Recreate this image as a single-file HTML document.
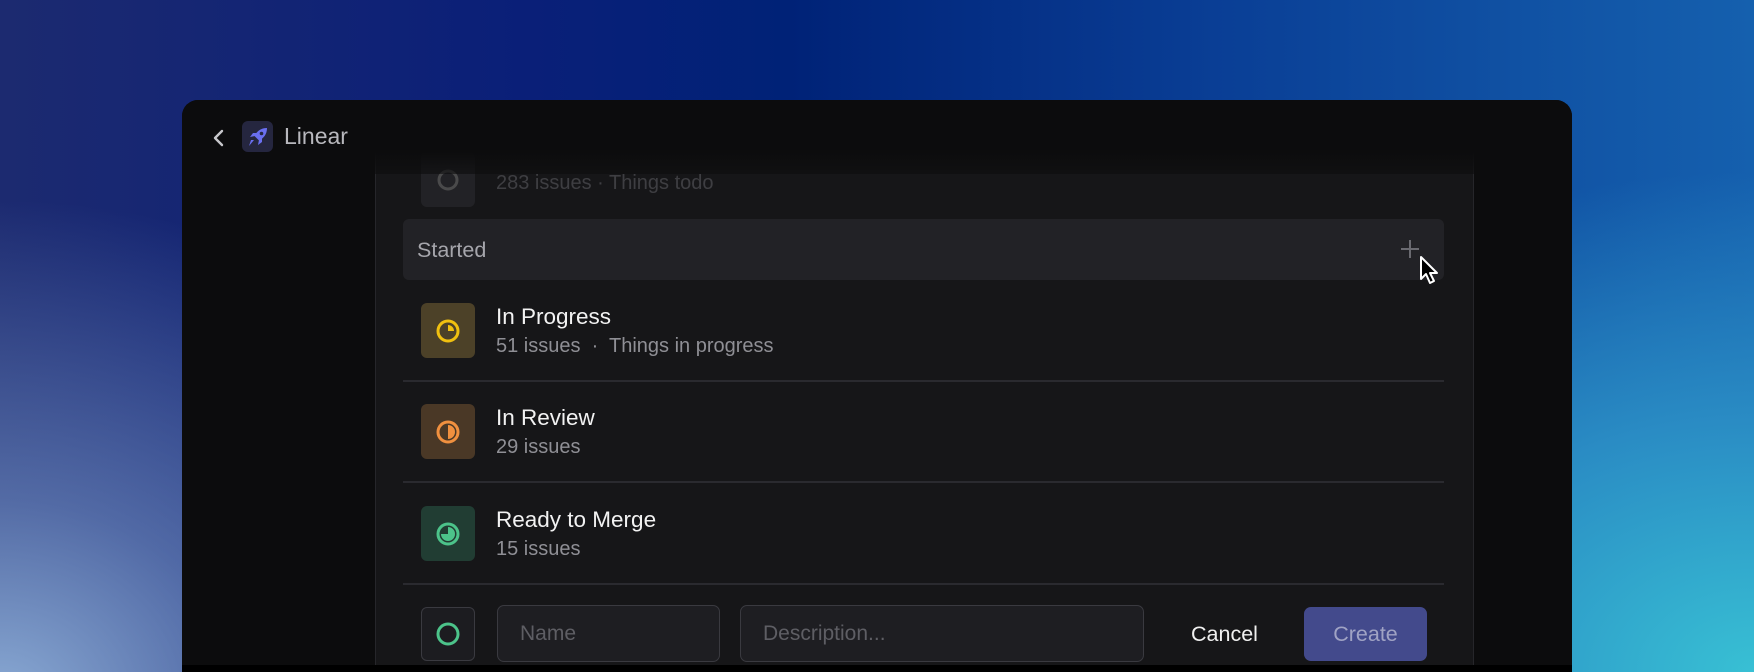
<!DOCTYPE html>
<html><head><style>
*{margin:0;padding:0;box-sizing:border-box}
html,body{width:1754px;height:672px;overflow:hidden}
body{position:relative;font-family:"Liberation Sans",sans-serif;
background:
radial-gradient(ellipse 600px 500px at 0px 700px,#8aaad4 0%,rgba(120,150,200,0.6) 40%,rgba(60,90,170,0) 100%),
radial-gradient(ellipse 700px 500px at 1754px 672px,#38c0d4 0%,#2a8cc4 50%,rgba(20,90,170,0) 100%),
linear-gradient(90deg,#1c2a70 0%,#0a1f78 30%,#002277 45%,#0a3f96 70%,#1560ae 100%);}
.win{position:absolute;left:182px;top:100px;width:1390px;height:565px;background:#0c0c0d;border-radius:16px 16px 0 0;overflow:hidden}
.panel{position:absolute;left:193px;top:0;width:1099px;height:600px;background:#161618;border-left:1px solid #26262a;border-right:1px solid #26262a}
.hdr{position:absolute;left:0;top:0;width:1390px;height:74px;background:linear-gradient(#0c0c0d 70%,rgba(12,12,13,0.6));z-index:5}
.row{position:absolute;left:228px;width:1041px}
.ic{position:absolute;left:11px;width:54px;height:55px;border-radius:6px;display:flex;align-items:center;justify-content:center}
.t{position:absolute;left:86px;font-size:22.5px;color:#f2f2f2}
.s{position:absolute;left:86px;font-size:20px;color:#8f8f95;white-space:nowrap}
.div{position:absolute;left:221px;width:1041px;height:2px;background:#2a2a2f}
</style></head><body>
<div class="win">
 <div class="panel"></div>
 <div class="hdr">
  <svg style="position:absolute;left:30px;top:28px" width="14" height="20" viewBox="0 0 14 20"><path d="M10 3 L3 10 L10 17" fill="none" stroke="#c8c8cc" stroke-width="2.4" stroke-linecap="round" stroke-linejoin="round"/></svg>
  <div style="position:absolute;left:60px;top:21px;width:31px;height:31px;border-radius:6px;background:#25263f;display:flex;align-items:center;justify-content:center">
   <svg width="24" height="24" viewBox="0 0 24 24"><path d="M21 3c-6 0-10 3-12.5 8l4.5 4.5c5-2.5 8-6.5 8-12.5z" fill="#6a6ff0"/><circle cx="15.5" cy="8.5" r="1.8" fill="#25263f"/><path d="M9 11l-5 1 3-4 5 0z M13 15l-1 5 4-3 0-5z" fill="#6a6ff0"/><path d="M8 15l-5 6 2-6z" fill="#6a6ff0"/></svg>
  </div>
  <div style="position:absolute;left:102px;top:23px;font-size:23px;color:#b8b8bd">Linear</div>
 </div>
 <div class="row" style="top:42px;height:60px;opacity:0.35">
  <div class="ic" style="top:10px;background:#3a3a40"><svg width="26" height="26" viewBox="0 0 26 26"><circle cx="13" cy="13" r="9" fill="none" stroke="#aaa" stroke-width="3"/></svg></div>
  <div class="s" style="top:30px;color:#8a8a90">283 issues · Things todo</div>
 </div>
 <div style="position:absolute;left:221px;top:119px;width:1041px;height:61px;background:#222226;border-radius:6px">
  <div style="position:absolute;left:14px;top:19px;font-size:21.5px;color:#a6a6ac">Started</div>
  <div style="position:absolute;left:998px;top:29px;width:18px;height:2px;background:#6a6a70"></div>
  <div style="position:absolute;left:1006px;top:21px;width:2px;height:18px;background:#6a6a70"></div>
 </div>
 <svg style="position:absolute;left:1237px;top:155px;z-index:6" width="24" height="30" viewBox="0 0 24 30"><path d="M2 2 L2 24 L7 19 L11 28 L15 26 L11 18 L18 18 Z" fill="#000" stroke="#fff" stroke-width="2" stroke-linejoin="round"/></svg>
 <div class="row" style="top:203px">
  <div class="ic" style="top:0;background:#4c4128"><svg width="28" height="28" viewBox="0 0 28 28"><circle cx="14" cy="14" r="10" fill="none" stroke="#f0c010" stroke-width="3"/><path d="M14 14 V8 A6 6 0 0 1 20 14 Z" fill="#f0c010"/></svg></div>
  <div class="t" style="top:1px">In Progress</div>
  <div class="s" style="top:32px">51 issues &nbsp;·&nbsp; Things in progress</div>
 </div>
 <div class="div" style="top:280px"></div>
 <div class="row" style="top:304px">
  <div class="ic" style="top:0;background:#4a3826"><svg width="28" height="28" viewBox="0 0 28 28"><circle cx="14" cy="14" r="10" fill="none" stroke="#f0903f" stroke-width="3"/><path d="M14 7 A7 7 0 0 1 14 21 Z" fill="#f0903f"/></svg></div>
  <div class="t" style="top:1px">In Review</div>
  <div class="s" style="top:32px">29 issues</div>
 </div>
 <div class="div" style="top:381px"></div>
 <div class="row" style="top:406px">
  <div class="ic" style="top:0;background:#213d33"><svg width="28" height="28" viewBox="0 0 28 28"><circle cx="14" cy="14" r="10" fill="none" stroke="#4cc38a" stroke-width="3"/><path d="M14 14 V7 A7 7 0 1 1 7 14 Z" fill="#4cc38a"/></svg></div>
  <div class="t" style="top:1px">Ready to Merge</div>
  <div class="s" style="top:32px">15 issues</div>
 </div>
 <div class="div" style="top:483px"></div>
 <div style="position:absolute;left:239px;top:507px;width:54px;height:54px;border:1px solid #3a3a40;border-radius:6px;background:#1c1c20;display:flex;align-items:center;justify-content:center"><svg width="28" height="28" viewBox="0 0 28 28"><circle cx="14" cy="14" r="10" fill="none" stroke="#4cc38a" stroke-width="3"/></svg></div>
 <div style="position:absolute;left:315px;top:505px;width:223px;height:57px;border:1px solid #3a3a40;border-radius:7px;background:#1e1e22;font-size:21px;color:#5e5e64;padding:16px 0 0 22px">Name</div>
 <div style="position:absolute;left:558px;top:505px;width:404px;height:57px;border:1px solid #3a3a40;border-radius:7px;background:#1e1e22;font-size:21px;color:#5e5e64;padding:16px 0 0 22px">Description...</div>
 <div style="position:absolute;left:1009px;top:522px;font-size:21.5px;color:#f0f0f0">Cancel</div>
 <div style="position:absolute;left:1122px;top:507px;width:123px;height:54px;border-radius:7px;background:#434a8c;font-size:21.5px;color:#a0a3c4;text-align:center;padding-top:15px">Create</div>
</div>
<div style="position:absolute;left:182px;top:665px;width:1390px;height:7px;background:#000"></div>
</body></html>
